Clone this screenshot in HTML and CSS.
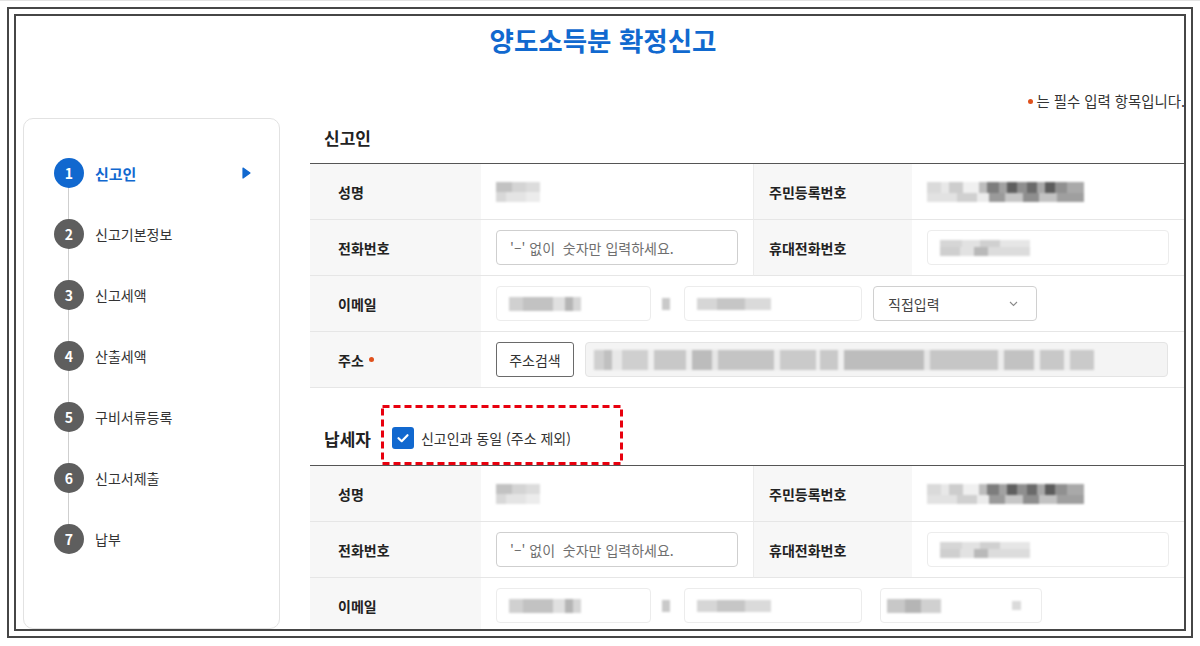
FILE: index.html
```html
<!DOCTYPE html>
<html lang="ko">
<head>
<meta charset="utf-8">
<title>양도소득분 확정신고</title>
<link rel="stylesheet" href="styles.css">
</head>
<body>
<div class="frame">
  <div class="frame-inner">
    <h1 class="title">양도소득분 확정신고</h1>
    <p class="req-note"><span class="req-dot"></span>는 필수 입력 항목입니다.</p>
    <div class="layout">
      <aside class="steps">
        <ol class="step-list">
          <li class="step active"><span class="num">1</span><span class="step-label">신고인</span>
            <svg class="step-arrow" width="9" height="12" viewBox="0 0 9 12"><path d="M1 1 L8 6 L1 11 Z" fill="#1168cf" stroke="#1168cf" stroke-width="1.2" stroke-linejoin="round"/></svg>
          </li>
          <li class="step"><span class="num">2</span><span class="step-label">신고기본정보</span></li>
          <li class="step"><span class="num">3</span><span class="step-label">신고세액</span></li>
          <li class="step"><span class="num">4</span><span class="step-label">산출세액</span></li>
          <li class="step"><span class="num">5</span><span class="step-label">구비서류등록</span></li>
          <li class="step"><span class="num">6</span><span class="step-label">신고서제출</span></li>
          <li class="step"><span class="num">7</span><span class="step-label">납부</span></li>
        </ol>
      </aside>
      <main class="form">
        <section class="sec">
          <div class="sec-head first"><h2>신고인</h2></div>
          <div class="grid">
            <div class="th">성명</div>
            <div class="td"><span class="blur blur-name"></span></div>
            <div class="th th2 vline">주민등록번호</div>
            <div class="td"><span class="blur blur-rrn"></span></div>

            <div class="th">전화번호</div>
            <div class="td"><input class="inp" type="text" placeholder="'–' 없이  숫자만 입력하세요."></div>
            <div class="th th2 vline">휴대전화번호</div>
            <div class="td td2"><div class="fake-inp faint"><span class="blur blur-phone"></span></div></div>

            <div class="th">이메일</div>
            <div class="td span3">
              <div class="fake-inp faint email1"><span class="blur blur-mail1"></span></div>
              <span class="blur blur-at"></span>
              <div class="fake-inp faint email2"><span class="blur blur-mail2"></span></div>
              <div class="select">직접입력
                <svg class="chev" width="9" height="6" viewBox="0 0 9 6"><path d="M1 1 L4.5 4.5 L8 1" fill="none" stroke="#8a8a8a" stroke-width="1.1"/></svg>
              </div>
            </div>

            <div class="th">주소<span class="req-dot small"></span></div>
            <div class="td span3">
              <button class="btn" type="button">주소검색</button>
              <div class="addr"><span class="blur blur-addr"></span></div>
            </div>
          </div>
        </section>

        <section class="sec">
          <div class="sec-head second">
            <h2>납세자</h2>
            <label class="chk">
              <span class="chk-box"><svg width="22" height="22" viewBox="0 0 22 22"><path d="M6.5 11.2 L9.7 14.2 L15.5 8.2" fill="none" stroke="#fff" stroke-width="2.2" stroke-linecap="round" stroke-linejoin="round"/></svg></span>
              <span class="chk-label">신고인과 동일 (주소 제외)</span>
            </label>
            <svg class="mark" width="242" height="60" viewBox="0 0 242 60"><rect x="1.5" y="1.5" width="239" height="57" fill="none" stroke="#e8000e" stroke-width="3" stroke-dasharray="7 4"/></svg>
          </div>
          <div class="grid">
            <div class="th">성명</div>
            <div class="td"><span class="blur blur-name"></span></div>
            <div class="th th2 vline">주민등록번호</div>
            <div class="td"><span class="blur blur-rrn"></span></div>

            <div class="th">전화번호</div>
            <div class="td"><input class="inp" type="text" placeholder="'–' 없이  숫자만 입력하세요."></div>
            <div class="th th2 vline">휴대전화번호</div>
            <div class="td td2"><div class="fake-inp faint"><span class="blur blur-phone"></span></div></div>

            <div class="th">이메일</div>
            <div class="td span3">
              <div class="fake-inp faint email1"><span class="blur blur-mail1"></span></div>
              <span class="blur blur-at"></span>
              <div class="fake-inp faint email2"><span class="blur blur-mail2"></span></div>
              <div class="fake-inp faint email3"><span class="blur blur-mail3"></span><span class="blur blur-dot"></span></div>
            </div>
          </div>
        </section>
      </main>
    </div>
  </div>
</div>
</body>
</html>
```

FILE: styles.css
```css
* { box-sizing: border-box; margin: 0; padding: 0; }
html, body { background: #fff; }
body {
  font-family: "Noto Sans CJK KR", "Noto Sans", sans-serif;
  color: #333;
  border-top: 1px solid #e3e3e3;
  padding: 6px 0 0 7px;
  height: 646px;
  overflow: hidden;
}
.frame {
  width: 1186px;
  height: 631px;
  border: 2px solid #464646;
  padding: 5px;
}
.frame-inner {
  height: 100%;
  border: 2px solid #464646;
  overflow: hidden;
}
.title {
  padding: 6px 0 0 6px;
  font-size: 26.5px;
  line-height: 36px;
  font-weight: 700;
  text-align: center;
  color: #1169cf;
}
.req-note {
  margin-top: 33px;
  font-size: 14.4px;
  line-height: 20px;
  text-align: right;
  color: #333;
  margin-right: -1px;
}
.req-dot {
  display: inline-block;
  width: 5px;
  height: 5px;
  border-radius: 50%;
  background: #e0511c;
  vertical-align: middle;
  margin: 0 4px 3px 0;
}
.req-dot.small { margin: 0 0 1px 5px; }

.layout {
  display: flex;
  gap: 30px;
  margin-top: 7px;
  padding-left: 7px;
}
.steps {
  flex: none;
  width: 257px;
  height: 511px;
  border: 1px solid #e2e2e2;
  border-radius: 10px;
  padding: 39px 28px 0 30px;
}
.step-list {
  list-style: none;
  background: linear-gradient(#cfcfcf, #cfcfcf) no-repeat 14px 15px / 1px 366px;
}
.step {
  display: flex;
  align-items: center;
  height: 30px;
  margin-bottom: 31px;
  font-size: 14px;
  color: #333;
}
.step:last-child { margin-bottom: 0; }
.num {
  flex: none;
  width: 30px;
  height: 30px;
  border-radius: 50%;
  background: #5e5e5e;
  color: #fff;
  font-weight: 700;
  font-size: 14px;
  display: flex;
  align-items: center;
  justify-content: center;
  margin-right: 11px;
}
.step.active .num { background: #1168cf; }
.step.active .step-label { color: #1168cf; font-weight: 700; font-size: 15px; }
.step-arrow { margin-left: auto; }

.form { flex: none; width: 900px; }
.sec-head {
  display: flex;
  align-items: center;
  height: 24px;
  padding-left: 14px;
  position: relative;
}
.sec-head.first { margin: 7px 0 14px; }
.sec-head.second { margin: 38px 0 15px; }
.sec-head h2 {
  font-size: 17px;
  font-weight: 700;
  color: #222;
}
.chk {
  display: flex;
  align-items: center;
  margin-left: 21px;
  gap: 7px;
}
.chk-box {
  width: 22px;
  height: 22px;
  border-radius: 3px;
  background: #1168cf;
  display: block;
}
.chk-box svg { display: block; }
.chk-label { font-size: 14px; color: #333; }
.mark {
  position: absolute;
  left: 71px;
  top: -21px;
}

.grid {
  display: grid;
  grid-template-columns: 171px 272px 159px 1fr;
  border-top: 1px solid #555;
}
.th, .td {
  height: 56px;
  border-bottom: 1px solid #e6e6e6;
  display: flex;
  align-items: center;
}
.th {
  background: #f7f7f7;
  font-size: 14px;
  font-weight: 700;
  color: #222;
  padding-left: 28px;
}
.th2 { padding-left: 16px; }
.vline { border-left: 1px solid #ececec; padding-left: 15px; }
.td { background: #fff; padding-left: 15px; gap: 11px; }
.td2 { padding-left: 15px; }
.span3 { grid-column: 2 / 5; }

.inp {
  width: 242px;
  height: 35px;
  border: 1px solid #cfcfcf;
  border-radius: 4px;
  padding: 0 13px;
  font-family: inherit;
  font-size: 14px;
  color: #333;
  outline: none;
}
.inp::placeholder { color: #6f6f6f; }
.fake-inp {
  width: 242px;
  height: 35px;
  border: 1px solid #d4d4d4;
  border-radius: 4px;
  display: flex;
  align-items: center;
  padding-left: 12px;
  background: #fff;
}
.fake-inp.faint { border-color: #ececec; }
.email1 { width: 155px; }
.email2 { width: 178px; }
.email3 { width: 162px; margin-left: 7px; justify-content: space-between; padding: 0 20px 0 6px; }
.select {
  width: 164px;
  height: 35px;
  border: 1px solid #d0d0d0;
  border-radius: 4px;
  display: flex;
  align-items: center;
  justify-content: space-between;
  padding: 0 18px 0 14px;
  font-size: 14px;
  color: #444;
}
.btn {
  width: 78px;
  height: 35px;
  border: 1px solid #6a6a6a;
  border-radius: 3px;
  background: #fff;
  font-family: inherit;
  font-size: 14px;
  color: #333;
}
.addr {
  width: 583px;
  height: 35px;
  border: 1px solid #e4e4e4;
  border-radius: 4px;
  background: #f4f4f4;
  display: flex;
  align-items: center;
  padding-left: 8px;
}

.blur { display: block; filter: blur(0.9px); }
.blur-name {
  width: 44px; height: 20px;
  background:
    linear-gradient(90deg, #c2c2c2 0 16px, #d4d4d4 16px 30px, #dcdcdc 30px) top / 100% 10px no-repeat,
    linear-gradient(90deg, #d8d8d8 0 10px, #e4e4e4 10px 30px, #ececec 30px) bottom / 100% 10px no-repeat;
}
.blur-rrn {
  width: 157px; height: 20px;
  background:
    linear-gradient(90deg, #dadada 0 14px, #e8e8e8 14px 22px, #cdcdcd 22px 36px, #f0f0f0 36px 52px, #bdbdbd 52px 60px,
      #7d7d7d 60px 72px, #a2a2a2 72px 80px, #5f5f5f 80px 90px, #8f8f8f 90px 100px, #6a6a6a 100px 110px,
      #a8a8a8 110px 118px, #5c5c5c 118px 128px, #909090 128px 140px, #a9a9a9 140px 157px) top / 100% 11px no-repeat,
    linear-gradient(90deg, #e2e2e2 0 30px, #d0d0d0 30px 50px, #ececec 50px 62px, #9a9a9a 62px 78px, #c6c6c6 78px 96px,
      #8e8e8e 96px 112px, #c2c2c2 112px 130px, #9f9f9f 130px 157px) bottom / 100% 9px no-repeat;
}
.blur-phone {
  width: 90px; height: 16px;
  background:
    linear-gradient(90deg, #d6d6d6 0 22px, #e2e2e2 22px 40px, #d0d0d0 40px 60px, #e6e6e6 60px 90px) top / 100% 7px no-repeat,
    linear-gradient(90deg, #cfcfcf 0 20px, #e2e2e2 20px 34px, #b9b9b9 34px 48px, #dcdcdc 48px 90px) bottom / 100% 9px no-repeat;
}
.blur-mail1 {
  width: 72px; height: 14px;
  background: linear-gradient(90deg, #d0d0d0 0 14px, #c2c2c2 14px 44px, #e0e0e0 44px 56px, #b5b5b5 56px 64px, #d6d6d6 64px);
}
.blur-at {
  width: 8px; height: 12px;
  background: #c9c9c9;
  margin-right: 3px;
}
.blur-mail2 {
  width: 74px; height: 12px;
  background: linear-gradient(90deg, #d6d6d6 0 20px, #c6c6c6 20px 48px, #dadada 48px);
}
.blur-mail3 {
  width: 54px; height: 14px;
  background: linear-gradient(90deg, #c8c8c8 0 18px, #b5b5b5 18px 34px, #d0d0d0 34px);
}
.blur-dot { width: 9px; height: 9px; background: #dadada; }
.blur-addr {
  width: 500px; height: 20px;
  background: linear-gradient(90deg,
    #d0d0d0 0 10px, #c0c0c0 10px 18px, #e8e8e8 18px 28px, #cfcfcf 28px 54px, #efefef 54px 60px,
    #c8c8c8 60px 92px, #ededed 92px 98px, #bcbcbc 98px 118px, #e6e6e6 118px 124px, #c4c4c4 124px 180px,
    #ececec 180px 186px, #cacaca 186px 222px, #eeeeee 222px 226px, #c9c9c9 226px 244px, #f0f0f0 244px 250px,
    #bdbdbd 250px 330px, #e6e6e6 330px 336px, #c6c6c6 336px 404px, #ececec 404px 410px, #c2c2c2 410px 440px,
    #eeeeee 440px 446px, #c8c8c8 446px 470px, #ededed 470px 476px, #cacaca 476px 500px);
}
```
